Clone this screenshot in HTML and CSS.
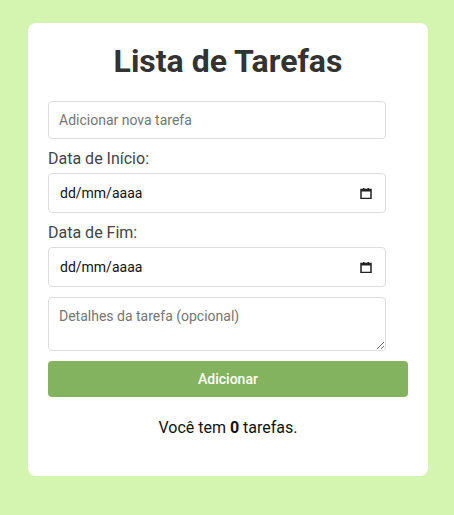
FILE: index.html
```html
<!DOCTYPE html>
<html lang="pt">
<head>
<meta charset="utf-8">
<title>Lista de Tarefas</title>
<link rel="stylesheet" href="styles.css">
</head>
<body>
<div class="card">
  <h1 class="title">Lista de Tarefas</h1>
  <input class="field" type="text" placeholder="Adicionar nova tarefa">
  <label class="label">Data de Início:</label>
  <div class="field date">
    <span class="date-text">dd/mm/aaaa</span>
    <svg class="cal" width="12" height="11" viewBox="0 0 12 11" aria-hidden="true">
      <rect x="1" y="1.5" width="10" height="9" fill="none" stroke="#222" stroke-width="1.5"/>
      <rect x="1" y="1" width="10" height="2.5" fill="#222"/>
      <rect x="3" y="0" width="1.5" height="2" fill="#222"/>
      <rect x="7.5" y="0" width="1.5" height="2" fill="#222"/>
    </svg>
  </div>
  <label class="label">Data de Fim:</label>
  <div class="field date">
    <span class="date-text">dd/mm/aaaa</span>
    <svg class="cal" width="12" height="11" viewBox="0 0 12 11" aria-hidden="true">
      <rect x="1" y="1.5" width="10" height="9" fill="none" stroke="#222" stroke-width="1.5"/>
      <rect x="1" y="1" width="10" height="2.5" fill="#222"/>
      <rect x="3" y="0" width="1.5" height="2" fill="#222"/>
      <rect x="7.5" y="0" width="1.5" height="2" fill="#222"/>
    </svg>
  </div>
  <textarea class="field area" placeholder="Detalhes da tarefa (opcional)"></textarea>
  <button class="btn">Adicionar</button>
  <p class="count">Você tem <strong>0</strong> tarefas.</p>
</div>
</body>
</html>
```
FILE: styles.css
```css
html, body {
  margin: 0;
  padding: 0;
}
body {
  background: #d3f5b0;
  font-family: Roboto, "Liberation Sans", sans-serif;
  padding: 23px 0 0 28px;
  min-height: 515px;
  box-sizing: border-box;
}
.card {
  width: 400px;
  height: 453px;
  box-sizing: border-box;
  background: #fff;
  border-radius: 8px;
  padding: 20px;
  display: flex;
  flex-direction: column;
  align-items: flex-start;
}
.title {
  align-self: stretch;
  text-align: center;
  font-size: 32px;
  font-weight: 700;
  color: #333;
  margin: 0 0 21px;
  line-height: 37px;
}
.field {
  width: 338px;
  box-sizing: border-box;
  border: 1px solid #ddd;
  border-radius: 4px;
  padding: 10px;
  font-family: Roboto, "Liberation Sans", sans-serif;
  font-size: 14px;
  color: #111;
  margin: 0 0 10px;
  background: #fff;
  height: 38px;
}
.field::placeholder {
  color: #757575;
}
.date {
  height: 40px;
  display: flex;
  align-items: center;
  justify-content: space-between;
  padding: 0 13px 0 11px;
}
.date-text {
  font-size: 14px;
  color: #111;
  line-height: 16px;
}
.cal {
  display: block;
}
.label {
  font-size: 16px;
  color: #444;
  line-height: 19px;
  margin: 0 0 5px;
}
.area {
  height: 54px;
  resize: vertical;
}
.btn {
  align-self: stretch;
  height: 36px;
  border: none;
  border-radius: 4px;
  background: #83b35e;
  color: #fff;
  font-family: Roboto, "Liberation Sans", sans-serif;
  font-size: 14px;
  font-weight: 500;
  margin-top: 0;
}
.count {
  align-self: stretch;
  text-align: center;
  font-size: 16px;
  color: #111;
  margin: 21px 0 0;
}
.count strong {
  font-weight: 700;
}
```
